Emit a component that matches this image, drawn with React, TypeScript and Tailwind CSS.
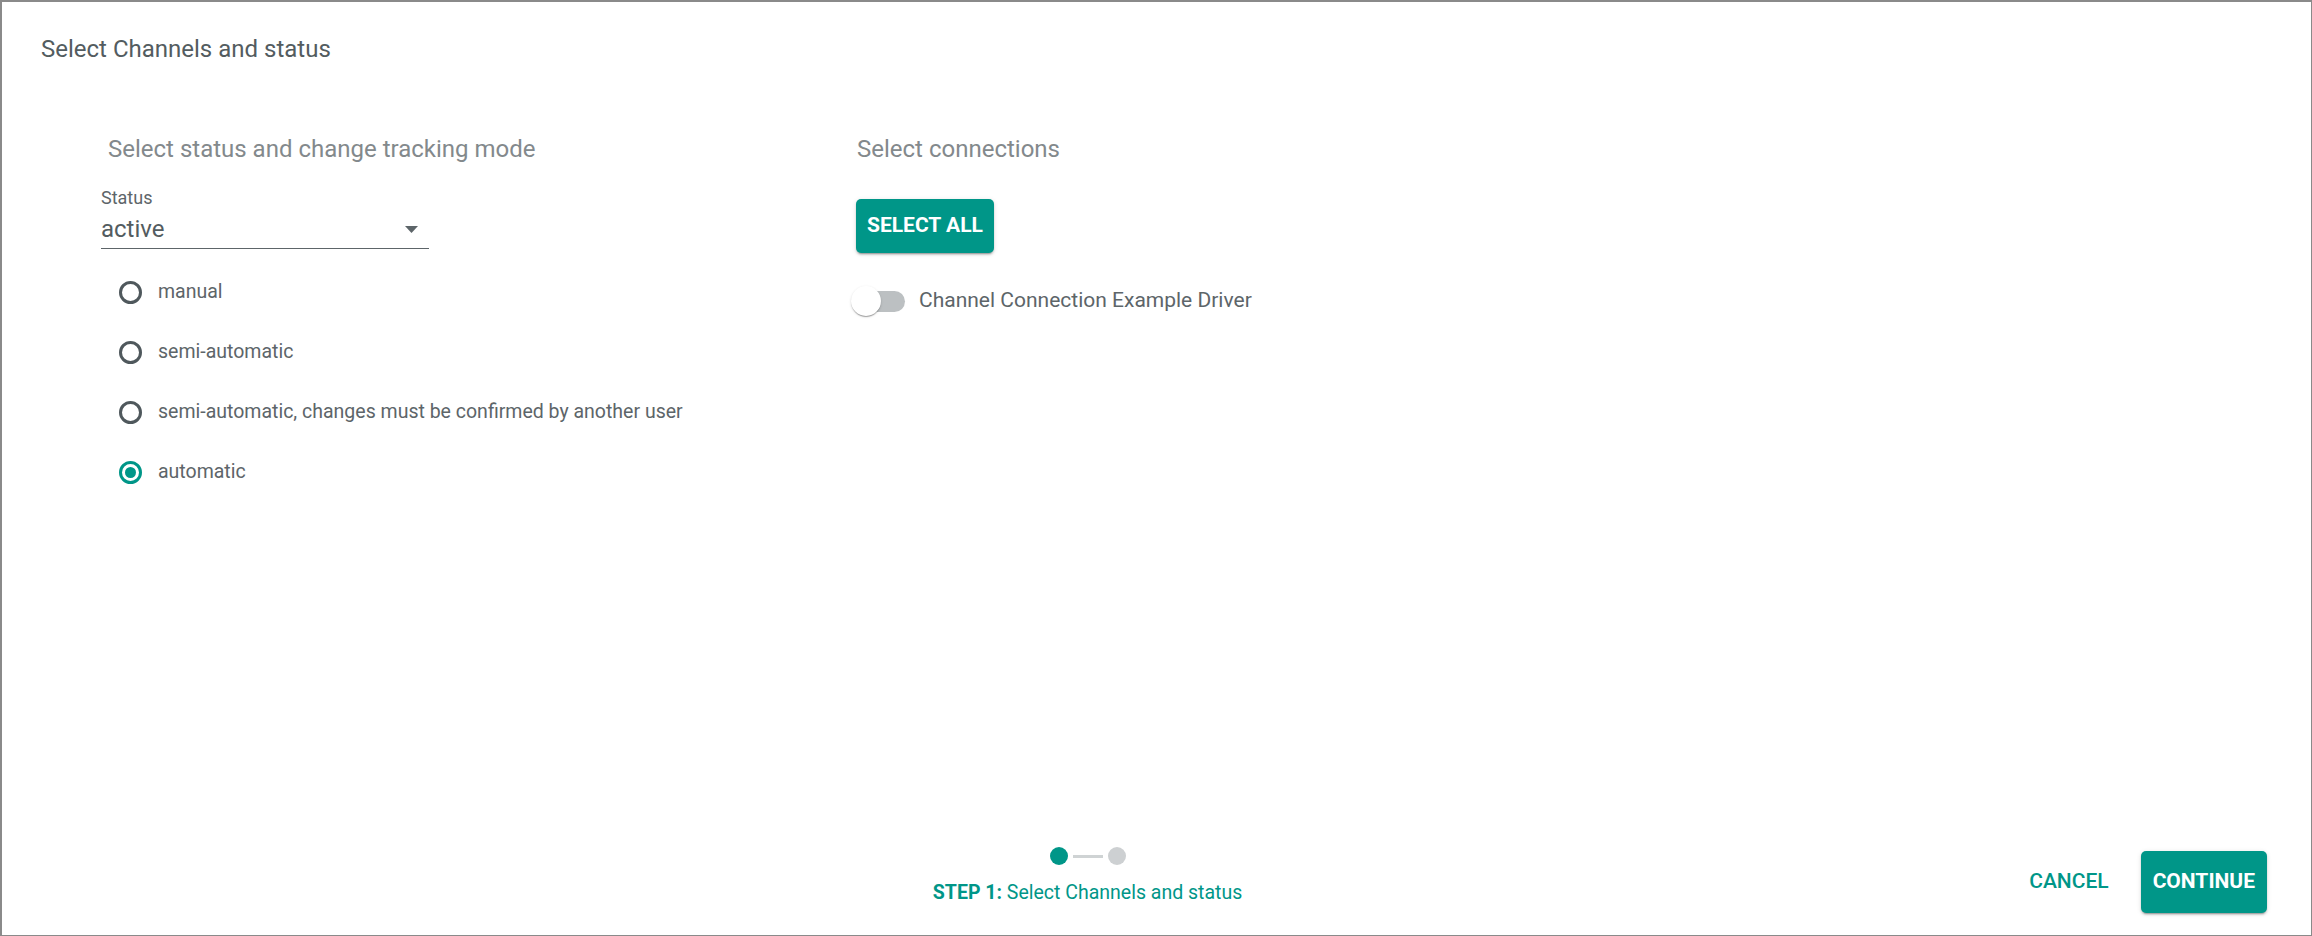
import { useState } from "react";

const MODES = [
  "manual",
  "semi-automatic",
  "semi-automatic, changes must be confirmed by another user",
  "automatic",
];

const RAISED =
  "shadow-[0_3px_1px_-2px_rgba(0,0,0,0.2),0_2px_2px_0_rgba(0,0,0,0.14),0_1px_5px_0_rgba(0,0,0,0.12)]";

export default function App() {
  const [mode, setMode] = useState("automatic");
  const [enabled, setEnabled] = useState(false);

  return (
    <div className="flex h-[936px] w-full flex-col border-t-2 border-l-2 border-r border-b border-[#8a8a8a] bg-white font-['Roboto',sans-serif] text-[#5d6569]">
      <div className="pl-[39px] pt-[31px]">
        <h1 className="text-[24px] leading-8 text-[#535c60]">
          Select Channels and status
        </h1>
      </div>

      <div className="mt-[68px] grid grid-cols-[755px_1fr] pl-[99px]">
        <div>
          <h2 className="pl-[7px] text-[24px] leading-8 text-[#83898c]">
            Select status and change tracking mode
          </h2>

          <div className="mt-[21px] w-[328px]">
            <label className="block text-[18px] leading-6 text-[#5d6569]">
              Status
            </label>
            <div className="mt-[3px] flex items-center justify-between border-b border-[#5d6569] pb-[3px]">
              <span className="text-[24px] leading-8 text-[#535c60]">active</span>
              <svg width="13" height="7" viewBox="0 0 13 7" className="mr-[11px]">
                <path d="M0 0h13L6.5 7z" fill="#5d6569" />
              </svg>
            </div>
          </div>

          <div className="mt-[13px] flex flex-col">
            {MODES.map((m) => (
              <button
                key={m}
                type="button"
                onClick={() => setMode(m)}
                className="flex h-[60px] items-center pl-[18px] text-left"
              >
                <span
                  className={`flex h-[23px] w-[23px] items-center justify-center rounded-full border-[3px] ${
                    mode === m ? "border-[#009688]" : "border-[#4f585c]"
                  }`}
                >
                  {mode === m && (
                    <span className="h-[11px] w-[11px] rounded-full bg-[#009688]" />
                  )}
                </span>
                <span className="ml-4 text-[19.5px] text-[#5d6569]">{m}</span>
              </button>
            ))}
          </div>
        </div>

        <div>
          <h2 className="pl-[1px] text-[24px] leading-8 text-[#83898c]">
            Select connections
          </h2>

          <button
            type="button"
            className={`mt-[34px] h-[54px] rounded-[5px] bg-[#009688] px-[11px] text-[21px] font-bold text-white ${RAISED}`}
          >
            SELECT ALL
          </button>

          <div className="mt-[33px] flex h-[30px] items-center">
            <button
              type="button"
              onClick={() => setEnabled(!enabled)}
              className="relative ml-[-5px] h-[30px] w-[54px]"
            >
              <span
                className={`absolute left-[6px] top-[5px] h-[21px] w-[48px] rounded-full ${
                  enabled ? "bg-[#80cbc4]" : "bg-[#bcc0c2]"
                }`}
              />
              <span
                className={`absolute top-0 h-[30px] w-[30px] rounded-full ${
                  enabled ? "left-[24px] bg-[#009688]" : "left-0 bg-white"
                } shadow-[0_2px_1px_-1px_rgba(0,0,0,0.2),0_1px_1px_0_rgba(0,0,0,0.14),0_1px_3px_0_rgba(0,0,0,0.12)]`}
              />
            </button>
            <span className="ml-[14px] text-[21px] text-[#5d6569]">
              Channel Connection Example Driver
            </span>
          </div>
        </div>
      </div>

      <div className="mt-auto flex items-end pb-[22px] pr-[44px]">
        <div className="mb-[6px] flex flex-1 flex-col items-center pl-[156px]">
          <div className="flex items-center">
            <span className="h-[18px] w-[18px] rounded-full bg-[#009688]" />
            <span className="mx-[5px] h-[3px] w-[30px] bg-[#cfd3d4]" />
            <span className="h-[18px] w-[18px] rounded-full bg-[#cdd0d2]" />
          </div>
          <p className="mt-[14px] text-[19.5px] leading-7 text-[#009688]">
            <span className="font-bold">STEP 1:</span> Select Channels and status
          </p>
        </div>

        <div className="flex items-center gap-5">
          <button
            type="button"
            className="h-[62px] px-3 text-[21px] font-medium text-[#009688]"
          >
            CANCEL
          </button>
          <button
            type="button"
            className={`h-[62px] rounded-[5px] bg-[#009688] px-3 text-[21px] font-bold text-white ${RAISED}`}
          >
            CONTINUE
          </button>
        </div>
      </div>
    </div>
  );
}
